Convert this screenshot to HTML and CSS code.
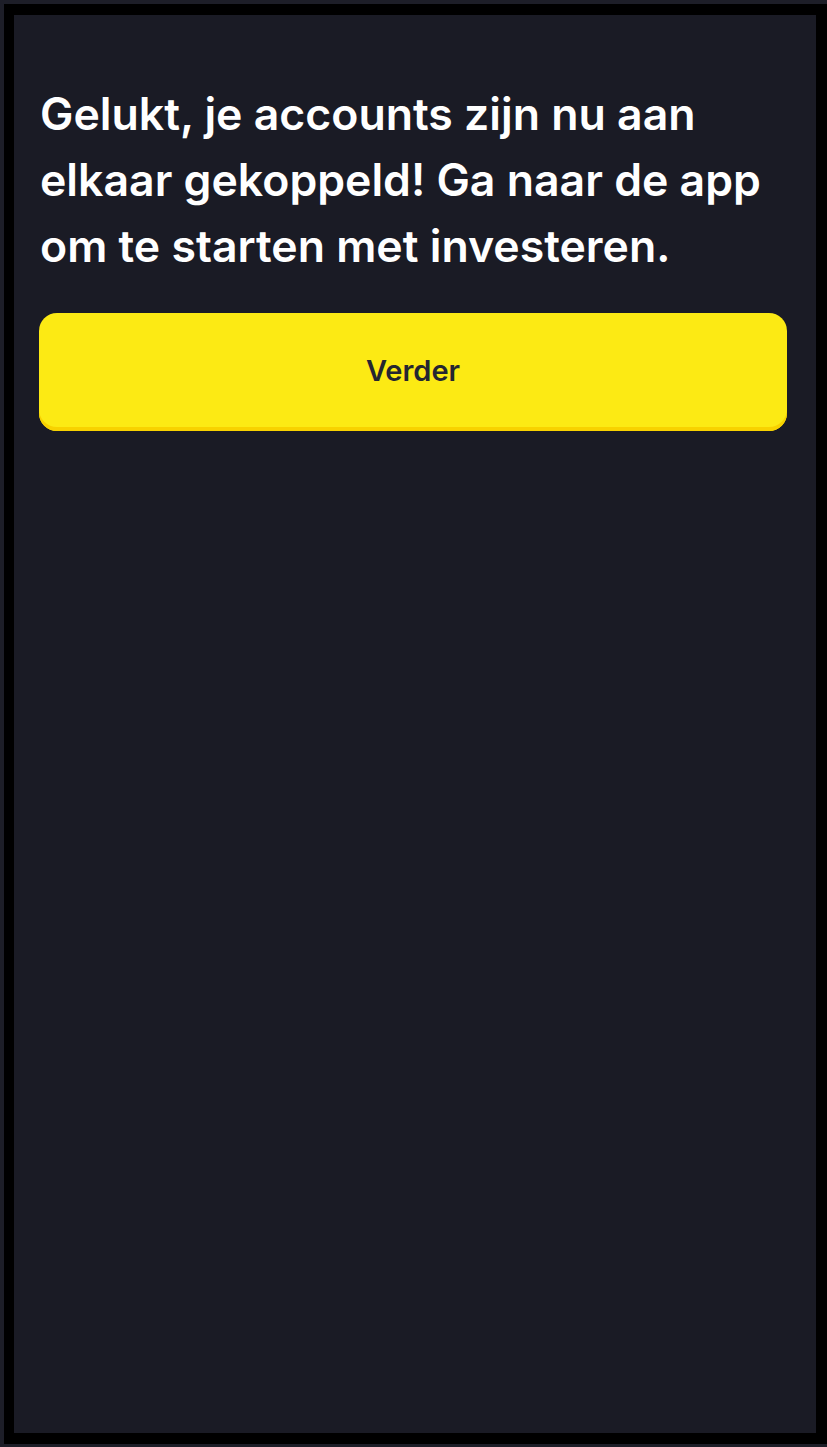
FILE: index.html
```html
<!DOCTYPE html>
<html lang="nl">
<head>
<meta charset="utf-8">
<title>Gelukt</title>
<link rel="stylesheet" href="styles.css">
</head>
<body>
<div class="frame">
  <main class="screen">
    <h1 class="title">Gelukt, je accounts zijn nu aan elkaar gekoppeld! Ga naar de app om te starten met investeren.</h1>
    <button class="btn" type="button">Verder</button>
  </main>
</div>
</body>
</html>
```
FILE: styles.css
```css
html, body {
  margin: 0;
  height: 100%;
}
body {
  background: #1d1e28;
  padding: 4px 0 3px 4px;
  box-sizing: border-box;
  font-family: Inter, "Noto Sans", sans-serif;
}
.frame {
  height: 100%;
  box-sizing: border-box;
  border-style: solid;
  border-color: #000;
  border-width: 11px 11px 11px 10px;
  background: #000;
}
.screen {
  height: 100%;
  box-sizing: border-box;
  background: #1a1b25;
  padding: 66px 29px 0 25px;
  display: flex;
  flex-direction: column;
}
.title {
  margin: 0 0 0 1px;
  color: #ffffff;
  font-size: 44.6px;
  line-height: 66px;
  font-weight: 600;
  letter-spacing: 0;
}
.btn {
  margin-top: 34px;
  height: 118px;
  width: 100%;
  border: 0;
  border-radius: 18px;
  background: #fcea14;
  box-shadow: inset 0 -4px 0 #f8d200;
  color: #252631;
  font-family: inherit;
  font-size: 29px;
  font-weight: 600;
  padding: 0 0 4px;
}
```
